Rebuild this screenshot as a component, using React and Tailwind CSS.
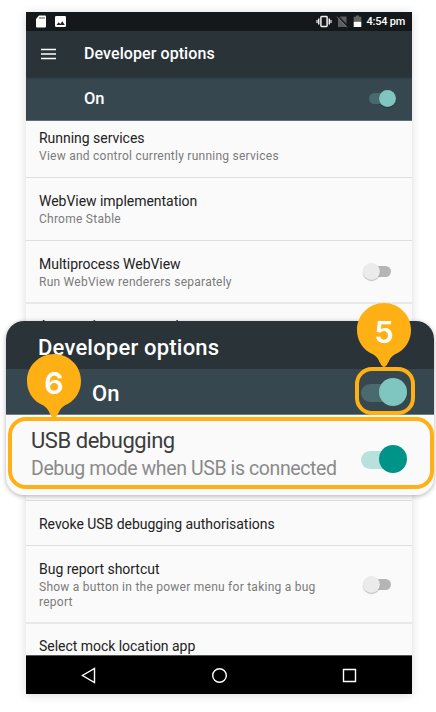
import React from "react";

function Switch({ on = false }) {
  return on ? (
    <div className="relative h-[18px] w-[28px] shrink-0">
      <div className="absolute left-[1px] top-[3px] h-[11px] w-[22px] rounded-full bg-[#4b6a6d]" />
      <div className="absolute right-0 top-0 size-[17px] rounded-full bg-[#7fc6c0] shadow-[0_1px_1px_rgba(0,0,0,0.3)]" />
    </div>
  ) : (
    <div className="relative h-[18px] w-[28px] shrink-0">
      <div className="absolute right-0 top-[3px] h-[11px] w-[22px] rounded-full bg-[#b5b5b5]" />
      <div className="absolute left-0 top-0 size-[17px] rounded-full bg-[#ebebeb] shadow-[0_1px_1px_rgba(0,0,0,0.25)]" />
    </div>
  );
}

function LargeSwitch({ track, thumb }) {
  return (
    <div className="relative h-[28px] w-[47px] shrink-0">
      <div className={`absolute left-[1px] top-[6px] h-[18px] w-[36px] rounded-full ${track}`} />
      <div className={`absolute right-0 top-0 size-[28px] rounded-full ${thumb}`} />
    </div>
  );
}

function Title({ children }) {
  return <div className="whitespace-nowrap text-[14px] leading-[18px] tracking-[-0.03px] text-[#222]">{children}</div>;
}

function Sub({ children }) {
  return <div className="mt-[2px] whitespace-nowrap text-[12px] leading-[14.5px] tracking-[0.25px] text-[#7b7b7b]">{children}</div>;
}

function Pin({ label }) {
  return (
    <svg className="block" width="56" height="68" viewBox="0 0 56 68">
      <path d="M28 1C13 1 1 13 1 28c0 10 5 18 12.500 22.500C19 53 21 54.500 23.500 60c1.500 2.500 2.500 5 4.500 5s3-2.500 4.500-5C35 54.500 37 53 42.500 50.500 50 46 55 38 55 28 55 13 43 1 28 1z" fill="#ffb015" />
      <text x="28" y="40.700" textAnchor="middle" fill="#fff" fontSize="30.500" fontWeight="600" fontFamily="Inter, sans-serif">{label}</text>
    </svg>
  );
}

export default function App() {
  return (
    <div className="relative h-[712px] w-[436px] overflow-hidden bg-white pl-[26px] pt-[12px] font-[Roboto,sans-serif]">
      <div className="flex h-[682px] w-[386px] flex-col bg-[#fafafa] shadow-[0_1px_9px_rgba(0,0,0,0.15)]">
        <div className="flex h-[19px] shrink-0 items-center bg-[#14181a] pl-[9px] pr-[7px] text-white">
          <svg width="12" height="13" viewBox="0 0 12 13">
            <path d="M4 .5h6q1 0 1 1v10q0 1-1 1H2q-1 0-1-1V4z" fill="#fff" />
            <path d="M5 2v2M7 2v2M9 2v2" stroke="#555" strokeWidth="1" />
          </svg>
          <svg className="ml-[7px]" width="13" height="13" viewBox="0 0 13 13">
            <rect x="1" y="1" width="11" height="11" rx="1.200" fill="#fff" />
            <path d="M2.500 10 4.700 7.200 6.300 9 8.300 6.200 10.800 10z" fill="#222" />
          </svg>
          <div className="flex-1" />
          <svg width="16" height="13" viewBox="0 0 16 13" fill="none" stroke="#eee">
            <rect x="4.900" y="1.500" width="6.200" height="10" rx=".7" strokeWidth="1.500" />
            <path d="M2.700 3.500v6M13.300 3.500v6" strokeWidth="1.500" />
            <path d="M1 5v3M15 5v3" strokeWidth="1.200" />
          </svg>
          <svg className="ml-[4px]" width="12" height="13" viewBox="0 0 12 13">
            <path d="M4.500 1.500H10.500v10.500H2V4z" fill="#5b5d5f" />
            <path d="M2.200 1.500 12 11.500" stroke="#14181a" strokeWidth="1.300" />
            <path d="M1 1.800 10.800 12.300" stroke="#77797b" strokeWidth="1" />
          </svg>
          <svg className="ml-[5px]" width="9" height="13" viewBox="0 0 9 13">
            <path d="M3 .5h3v1.300h2.300v5.200H.7V1.800H3z" fill="#626466" />
            <path d="M.7 6.800h7.600v5.200H.7z" fill="#fff" />
          </svg>
          <span className="ml-[5px] whitespace-nowrap text-[11px] font-medium leading-none tracking-[-0.25px]">4:54 pm</span>
        </div>
        <div className="flex h-[46px] shrink-0 items-center bg-[#293338] pl-[15px] text-white">
          <svg width="15" height="12" viewBox="0 0 15 12" stroke="#fff" strokeWidth="1.400"><path d="M0 1.500h15M0 6h15M0 10.500h15" /></svg>
          <span className="ml-[28px] text-[16px] font-medium tracking-[0.08px]">Developer options</span>
        </div>
        <div className="flex h-[44px] shrink-0 items-center justify-between border-b border-[#5c6e76] bg-[#37474f] pl-[58px] pr-[16px] text-white shadow-[inset_0_2px_2px_-1px_rgba(0,0,0,0.3)]">
          <span className="pt-px text-[16.5px] font-medium">On</span>
          <Switch on />
        </div>
        <div className="h-[57px] shrink-0 border-b border-[#dedede] pl-[13px] pt-[8px]">
          <Title>Running services</Title>
          <Sub>View and control currently running services</Sub>
        </div>
        <div className="h-[63px] shrink-0 border-b border-[#dedede] pl-[13px] pt-[14px]">
          <Title>WebView implementation</Title>
          <Sub>Chrome Stable</Sub>
        </div>
        <div className="flex h-[63px] shrink-0 justify-between border-b-2 border-[#e8e8e8] pl-[13px] pr-[21.500px] pt-[14px]">
          <div>
            <Title>Multiprocess WebView</Title>
            <Sub>Run WebView renderers separately</Sub>
          </div>
          <div className="pt-[8px]"><Switch /></div>
        </div>
        <div className="h-[197px] shrink-0 border-b border-[#dedede] pl-[13px] pt-[13px]">
          <Title>Automatic system updates</Title>
        </div>
        <div className="h-[45px] shrink-0 border-b border-[#dedede] pl-[13px] pt-[14px]">
          <Title>Revoke USB debugging authorisations</Title>
        </div>
        <div className="flex h-[78px] shrink-0 justify-between border-b-2 border-[#e8e8e8] pl-[13px] pr-[21.500px] pt-[14px]">
          <div>
            <Title>Bug report shortcut</Title>
            <Sub>Show a button in the power menu for taking a bug<br />report</Sub>
          </div>
          <div className="pt-[16px]"><Switch /></div>
        </div>
        <div className="min-h-0 flex-1 overflow-hidden pl-[13px] pt-[13px]">
          <Title>Select mock location app</Title>
        </div>
        <div className="flex h-[39px] shrink-0 items-center border-t border-[#555] bg-black pl-[55px]">
          <svg width="16" height="17" viewBox="0 0 16 17" fill="none" stroke="#fff" strokeWidth="1.400"><path d="M13.500 1.500v14L1.500 8.500z" /></svg>
          <svg className="ml-[114px]" width="17" height="17" viewBox="0 0 17 17" fill="none" stroke="#fff" strokeWidth="1.400"><circle cx="8.500" cy="8.500" r="6.800" /></svg>
          <svg className="ml-[114px]" width="15" height="15" viewBox="0 0 15 15" fill="none" stroke="#fff" strokeWidth="1.400"><path d="M1.500 1.500h12v12h-12z" /></svg>
        </div>
      </div>

      <div className="absolute left-[6px] top-[321px] flex h-[174px] w-[428px] flex-col overflow-hidden rounded-[18px] bg-[#fafafa] shadow-[0_1px_5px_rgba(0,0,0,0.3)]">
        <div className="flex h-[48px] shrink-0 items-center bg-[#293338] pl-[32px] pt-[5px] text-[22px] font-medium tracking-[0.2px] text-white">
          <span>Developer options</span>
        </div>
        <div className="flex h-[46px] shrink-0 items-center justify-between border-b border-[#6e7e85] bg-[#37474f] pl-[86px] pr-[27px] text-[22px] font-medium text-white">
          <span className="pt-[3px]">On</span>
          <LargeSwitch track="bg-[#4b6a6d]" thumb="bg-[#7fc6c0]" />
        </div>
        <div className="flex flex-1 justify-between pl-[25px] pr-[27px] pt-[12px]">
          <div className="whitespace-nowrap">
            <div className="text-[22px] leading-[28px] tracking-[-0.45px] text-[#3c3c3c]">USB debugging</div>
            <div className="text-[19.500px] leading-[28px] tracking-[-0.4px] text-[#8a8a8a]">Debug mode when USB is connected</div>
          </div>
          <div className="pt-[18px]"><LargeSwitch track="bg-[#b8e0dc]" thumb="bg-[#009488]" /></div>
        </div>
      </div>
      <div className="absolute left-[355px] top-[367px] h-[48px] w-[60px] rounded-[17px] border-4 border-[#ffb015]" />
      <div className="absolute left-[8px] top-[417px] h-[72px] w-[426px] rounded-[18px] border-4 border-[#ffb015]" />
      <div className="absolute left-[356px] top-[302px]"><Pin label="5" /></div>
      <div className="absolute left-[26px] top-[353px]"><Pin label="6" /></div>
    </div>
  );
}
